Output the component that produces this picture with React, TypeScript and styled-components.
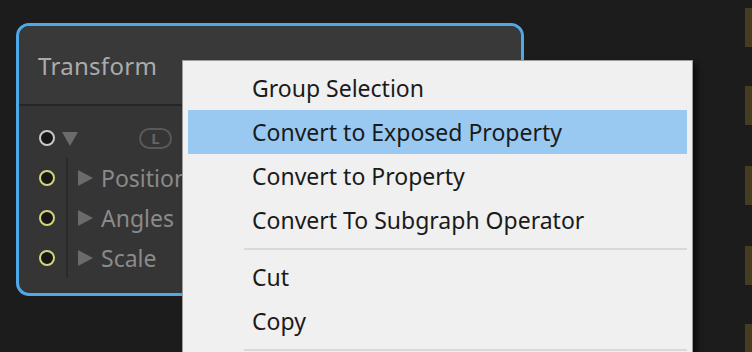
import React from 'react';
import styled, { createGlobalStyle } from 'styled-components';

const GlobalStyle = createGlobalStyle`
  html, body {
    margin: 0;
    padding: 0;
    background: #1c1c1c;
    overflow: hidden;
  }
`;

const Canvas = styled.div`
  position: relative;
  width: 752px;
  height: 352px;
  background: #1c1c1c;
  overflow: hidden;
  font-family: 'Noto Sans', 'Liberation Sans', sans-serif;
`;

const Node = styled.div`
  position: absolute;
  left: 16px;
  top: 23px;
  width: 508px;
  height: 273px;
  box-sizing: border-box;
  border: 3px solid #4ea9e6;
  border-radius: 13px;
  background: #353535;
  overflow: hidden;
  display: flex;
  flex-direction: column;
`;

const NodeHeader = styled.div`
  height: 78px;
  flex: none;
  display: flex;
  align-items: center;
  padding-left: 19px;
  background: #393939;
  border-bottom: 2px solid #262626;
  color: #ababab;
  font-size: 24px;
  letter-spacing: 0.3px;
`;

const NodeBody = styled.div`
  display: flex;
  flex-direction: column;
  padding-top: 12px;
`;

const Row = styled.div`
  height: 40px;
  display: flex;
  align-items: center;
`;

const Port = styled.div<{ $ring: string }>`
  width: 16px;
  height: 16px;
  box-sizing: border-box;
  border-radius: 50%;
  border: 2.5px solid ${(p) => p.$ring};
  background: #161616;
  margin-left: 20px;
  flex: none;
`;

const Guide = styled.div`
  width: 2px;
  height: 40px;
  background: #2a2a2a;
  margin-left: 11px;
  flex: none;
`;

const Arrow = styled.div<{ $down?: boolean }>`
  width: 0;
  height: 0;
  flex: none;
  ${(p) =>
    p.$down
      ? `
    border-left: 8px solid transparent;
    border-right: 8px solid transparent;
    border-top: 14px solid #6b6b6b;
    margin-left: 7px;
    margin-top: 2px;
  `
      : `
    border-top: 8px solid transparent;
    border-bottom: 8px solid transparent;
    border-left: 15px solid #6b6b6b;
    margin-left: 10px;
  `}
`;

const Label = styled.span`
  color: #8a8a8a;
  font-size: 23px;
  margin-left: 8px;
  white-space: nowrap;
`;

const Badge = styled.div`
  margin-left: 61px;
  width: 33px;
  height: 21px;
  box-sizing: border-box;
  border: 2px solid #595959;
  border-radius: 11px;
  display: flex;
  align-items: center;
  justify-content: center;
  color: #656565;
  font-size: 15px;
  font-weight: bold;
  line-height: 1;
`;

const SideBar = styled.div<{ $top: number }>`
  position: absolute;
  right: 0;
  top: ${(p) => p.$top}px;
  width: 7px;
  height: 39px;
  background: #463c20;
`;

const Menu = styled.div`
  position: absolute;
  left: 182px;
  top: 60px;
  width: 511px;
  height: 310px;
  box-sizing: border-box;
  background: #f0f0f0;
  border: 1px solid #9c9c9c;
  box-shadow: 4px 4px 5px rgba(0, 0, 0, 0.55);
  padding: 5px 5px 0 5px;
  display: flex;
  flex-direction: column;
`;

const Item = styled.div<{ $active?: boolean }>`
  height: 44px;
  flex: none;
  display: flex;
  align-items: center;
  padding-left: 64px;
  background: ${(p) => (p.$active ? '#99c9f1' : 'transparent')};
  color: #1a1a1a;
  font-size: 23px;
  white-space: nowrap;
`;

const Separator = styled.div`
  height: 2px;
  margin: 6px 0 5px 56px;
  background: #d9d9d9;
  flex: none;
`;

export default function App() {
  return (
    <Canvas>
      <GlobalStyle />
      {[8, 86, 166, 246, 324].map((t) => (
        <SideBar key={t} $top={t} />
      ))}
      <Node>
        <NodeHeader>Transform</NodeHeader>
        <NodeBody>
          <Row>
            <Port $ring="#c8c8c8" />
            <Arrow $down />
            <Badge>L</Badge>
          </Row>
          <Row>
            <Port $ring="#d4d47c" />
            <Guide />
            <Arrow />
            <Label>Position</Label>
          </Row>
          <Row>
            <Port $ring="#d4d47c" />
            <Guide />
            <Arrow />
            <Label>Angles</Label>
          </Row>
          <Row>
            <Port $ring="#d4d47c" />
            <Guide />
            <Arrow />
            <Label>Scale</Label>
          </Row>
        </NodeBody>
      </Node>
      <Menu>
        <Item>Group Selection</Item>
        <Item $active>Convert to Exposed Property</Item>
        <Item>Convert to Property</Item>
        <Item>Convert To Subgraph Operator</Item>
        <Separator />
        <Item>Cut</Item>
        <Item>Copy</Item>
        <Separator />
      </Menu>
    </Canvas>
  );
}
